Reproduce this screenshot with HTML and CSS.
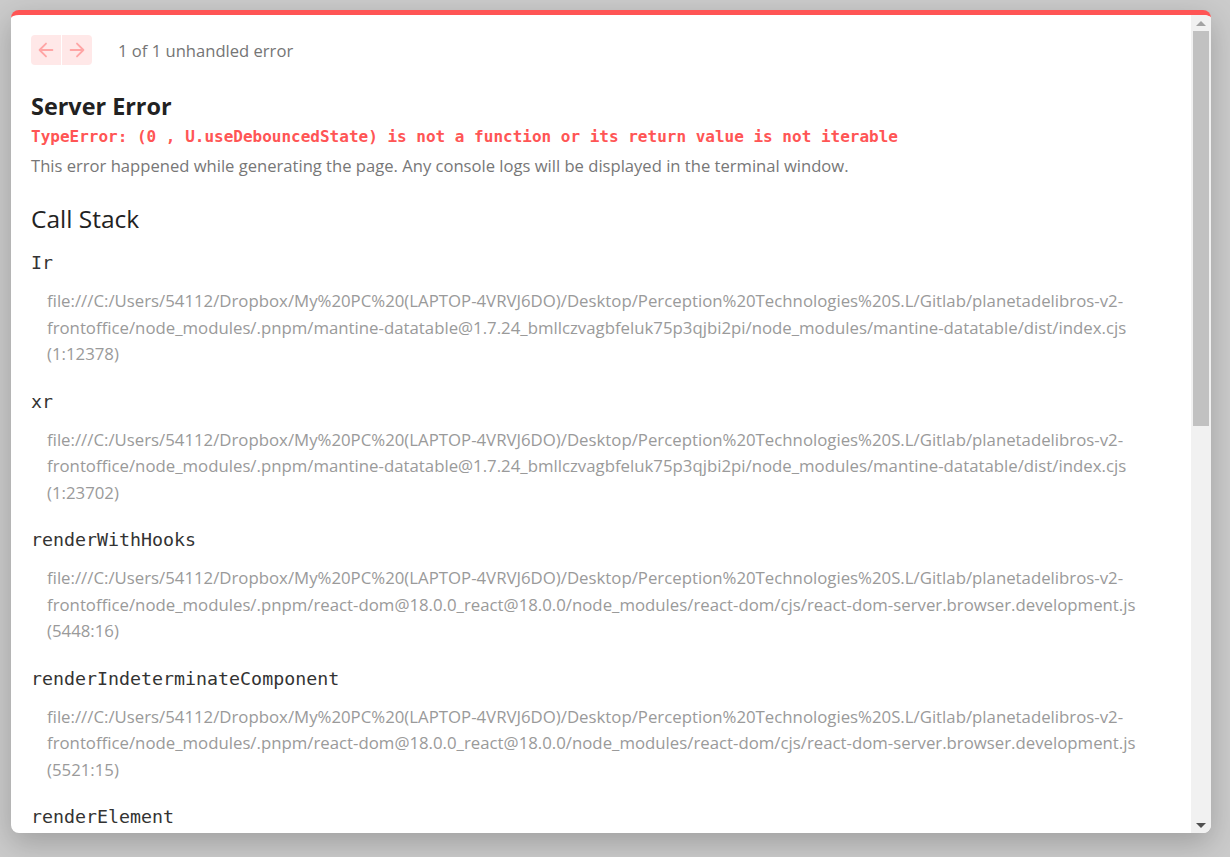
FILE: index.html
```html
<!DOCTYPE html>
<html lang="en">
<head>
    <meta charset="UTF-8">
    <meta name="viewport" content="width=device-width, initial-scale=1.0">
    <title>Server Error</title>
    <link rel="stylesheet" href="styles.css">
</head>
<body>
    <div class="dialog">
        <div class="dialog-body">
            <nav class="pager">
                <div class="pager-buttons">
                    <button class="pager-btn" aria-label="previous">
                        <svg viewBox="0 0 24 24"><path d="M19 12H5M12 19l-7-7 7-7" /></svg>
                    </button>
                    <button class="pager-btn" aria-label="next">
                        <svg viewBox="0 0 24 24"><path d="M5 12h14M12 5l7 7-7 7" /></svg>
                    </button>
                </div>
                <span class="pager-label">1 of 1 unhandled error</span>
            </nav>

            <h1 class="title">Server Error</h1>
            <p class="message">TypeError: (0 , U.useDebouncedState) is not a function or its return value is not iterable</p>
            <p class="desc">This error happened while generating the page. Any console logs will be displayed in the terminal window.</p>

            <h2 class="section">Call Stack</h2>

            <div class="frame">
                <h3 class="frame-name">Ir</h3>
                <p class="frame-file">file:///C:/Users/54112/Dropbox/My%20PC%20(LAPTOP-4VRVJ6DO)/Desktop/Perception%20Technologies%20S.L/Gitlab/planetadelibros-v2-<br>frontoffice/node_modules/.pnpm/mantine-datatable@1.7.24_bmllczvagbfeluk75p3qjbi2pi/node_modules/mantine-datatable/dist/index.cjs<br>(1:12378)</p>
            </div>
            <div class="frame">
                <h3 class="frame-name">xr</h3>
                <p class="frame-file">file:///C:/Users/54112/Dropbox/My%20PC%20(LAPTOP-4VRVJ6DO)/Desktop/Perception%20Technologies%20S.L/Gitlab/planetadelibros-v2-<br>frontoffice/node_modules/.pnpm/mantine-datatable@1.7.24_bmllczvagbfeluk75p3qjbi2pi/node_modules/mantine-datatable/dist/index.cjs<br>(1:23702)</p>
            </div>
            <div class="frame">
                <h3 class="frame-name">renderWithHooks</h3>
                <p class="frame-file">file:///C:/Users/54112/Dropbox/My%20PC%20(LAPTOP-4VRVJ6DO)/Desktop/Perception%20Technologies%20S.L/Gitlab/planetadelibros-v2-<br>frontoffice/node_modules/.pnpm/react-dom@18.0.0_react@18.0.0/node_modules/react-dom/cjs/react-dom-server.browser.development.js<br>(5448:16)</p>
            </div>
            <div class="frame">
                <h3 class="frame-name">renderIndeterminateComponent</h3>
                <p class="frame-file">file:///C:/Users/54112/Dropbox/My%20PC%20(LAPTOP-4VRVJ6DO)/Desktop/Perception%20Technologies%20S.L/Gitlab/planetadelibros-v2-<br>frontoffice/node_modules/.pnpm/react-dom@18.0.0_react@18.0.0/node_modules/react-dom/cjs/react-dom-server.browser.development.js<br>(5521:15)</p>
            </div>
            <div class="frame">
                <h3 class="frame-name">renderElement</h3>
            </div>
        </div>

        <div class="scrollbar">
            <span class="scroll-btn up"></span>
            <div class="scroll-track">
                <div class="scroll-thumb"></div>
            </div>
            <span class="scroll-btn down"></span>
        </div>
    </div>
</body>
</html>
```

FILE: styles.css
```css
body {
    margin: 0;
    height: 100vh;
    box-sizing: border-box;
    padding: 10px 19px 24px 11px;
    background: #cbcbcb;
    font-family: "Open Sans", "Noto Sans", sans-serif;
    font-size: 16.6px;
}

.dialog {
    width: 1200px;
    height: 823px;
    box-sizing: border-box;
    display: flex;
    background: #fff;
    border-top: 5px solid #ff5555;
    border-radius: 8px;
    overflow: hidden;
    box-shadow: 0 10px 30px rgba(0, 0, 0, 0.22);
}

.dialog-body {
    flex: 1;
    overflow: hidden;
    padding: 20px 20px 0 20px;
}

/* scrollbar column at the right edge of the dialog */
.scrollbar {
    width: 20px;
    display: flex;
    flex-direction: column;
    background: #f1f1f1;
}

.scroll-btn {
    height: 16px;
    display: flex;
    align-items: center;
    justify-content: center;
}

.scroll-btn::before {
    content: "";
    border-left: 5px solid transparent;
    border-right: 5px solid transparent;
}

.scroll-btn.up::before {
    border-bottom: 5px solid #a3a3a3;
}

.scroll-btn.down::before {
    border-top: 5px solid #505050;
}

.scroll-track {
    flex: 1;
    padding: 0 2px;
}

.scroll-thumb {
    height: 395px;
    background: #c1c1c1;
}

.pager {
    display: flex;
    align-items: center;
    height: 30px;
}

.pager-buttons {
    display: flex;
    gap: 1px;
}

.pager-btn {
    width: 30px;
    height: 30px;
    padding: 0;
    border: 0;
    background: #ffe8e8;
    display: flex;
    align-items: center;
    justify-content: center;
}

.pager-btn:first-child {
    border-radius: 4px 0 0 4px;
}

.pager-btn:last-child {
    border-radius: 0 4px 4px 0;
}

.pager-btn svg {
    width: 22px;
    height: 22px;
    fill: none;
    stroke: #ffa5a5;
    stroke-width: 2;
    stroke-linecap: round;
    stroke-linejoin: round;
}

.pager-label {
    margin-left: 26px;
    color: #757575;
}

.title {
    margin: 25px 0 0 0;
    font-size: 23.4px;
    line-height: 32px;
    font-weight: 700;
    color: #222;
}

.message {
    margin: 4px 0 0 0;
    font-family: "DejaVu Sans Mono", monospace;
    font-size: 16px;
    line-height: 22px;
    font-weight: 700;
    color: #ff5555;
}

.desc {
    margin: 6px 0 0 0;
    line-height: 24px;
    color: #777;
}

.section {
    margin: 26px 0 0 0;
    font-size: 24.5px;
    line-height: 30px;
    font-weight: 500;
    color: #222;
}

.frame {
    margin-bottom: 22px;
}

.frame:first-of-type {
    margin-top: 17px;
}

.frame-name {
    margin: 0;
    font-family: "DejaVu Sans Mono", monospace;
    font-size: 18.3px;
    line-height: 24px;
    font-weight: 400;
    color: #333;
}

.frame-file {
    margin: 13px 0 0 0;
    padding-left: 16px;
    font-size: 16.8px;
    line-height: 26.5px;
    color: #9a9a9a;
    white-space: nowrap;
}
```
